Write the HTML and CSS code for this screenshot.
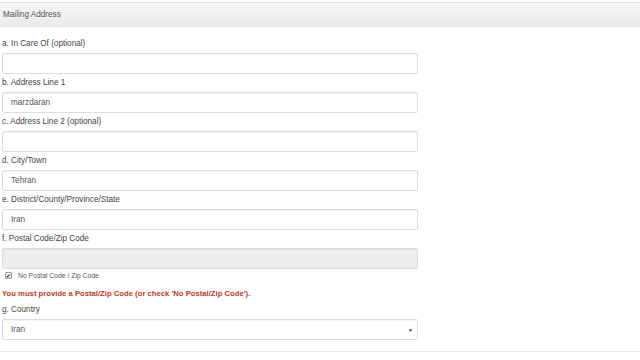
FILE: index.html
```html
<!DOCTYPE html>
<html lang="en">
  <head>
    <meta charset="utf-8">
    <title>Mailing Address</title>
    <link rel="stylesheet" href="styles.css">
  </head>
  <body>
    <div class="panel">
      <div class="panel-heading">Mailing Address</div>
      <div class="panel-body">
        <div class="field">
          <label>a. In Care Of (optional)</label>
          <input type="text" class="form-control" value="">
        </div>
        <div class="field">
          <label>b. Address Line 1</label>
          <input type="text" class="form-control" value="marzdaran">
        </div>
        <div class="field">
          <label>c. Address Line 2 (optional)</label>
          <input type="text" class="form-control" value="">
        </div>
        <div class="field">
          <label>d. City/Town</label>
          <input type="text" class="form-control" value="Tehran">
        </div>
        <div class="field">
          <label>e. District/County/Province/State</label>
          <input type="text" class="form-control" value="Iran">
        </div>
        <div class="field">
          <label>f. Postal Code/Zip Code</label>
          <input type="text" class="form-control" value="" disabled>
        </div>
        <div class="check-row">
          <span class="check-box">&#10004;</span>
          <label>No Postal Code / Zip Code</label>
        </div>
        <div class="error-text">You must provide a Postal/Zip Code (or check 'No Postal/Zip Code').</div>
        <div class="field">
          <label>g. Country</label>
          <div class="select-box">
            <span>Iran</span>
            <span class="caret">&#9660;</span>
          </div>
        </div>
      </div>
    </div>
  </body>
</html>
```

FILE: styles.css
```css
body {
  margin: 0;
  background: white;
  font-family: "Liberation Sans", Arial, sans-serif;
  color: #444;
}
.panel {
  margin-top: 2px;
  border-bottom: 1px solid #e6e6e6;
}
.panel-heading {
  height: 23px;
  line-height: 23px;
  padding-left: 3px;
  font-size: 8.2px;
  color: #555;
  background: linear-gradient(#f6f6f6, #ebebeb);
  border-top: 1px solid #e2e2e2;
  border-bottom: 1px solid #e2e2e2;
}
.panel-body {
  padding: 11px 0 8px 2px;
}
.field {
  margin-bottom: 3px;
}
.field label {
  display: block;
  height: 12px;
  line-height: 12px;
  margin-bottom: 3px;
  font-size: 8.2px;
  color: #444;
}
.form-control {
  display: block;
  box-sizing: border-box;
  width: 416px;
  height: 21px;
  margin: 0;
  padding: 0 8px;
  border: 1px solid #dcdcdc;
  border-radius: 2px;
  box-shadow: inset 0 1px 1px rgba(0, 0, 0, 0.05);
  background: white;
  font-family: "Liberation Sans", Arial, sans-serif;
  font-size: 8.2px;
  color: #555;
}
.form-control:disabled {
  background: #eeeeee;
}
.check-row {
  display: flex;
  align-items: center;
  height: 13px;
  margin-top: -3px;
}
.check-box {
  display: flex;
  align-items: center;
  justify-content: center;
  box-sizing: border-box;
  width: 7px;
  height: 7px;
  margin: 0 6px 0 3px;
  border: 1px solid #999;
  border-radius: 1px;
  background: #f4f4f4;
  font-size: 6px;
  line-height: 1;
  color: #222;
}
.check-row label {
  font-size: 6.8px;
  color: #555;
}
.error-text {
  height: 12px;
  line-height: 12px;
  margin: 6px 0 4px;
  font-size: 7.7px;
  font-weight: bold;
  color: #c0392b;
}
.select-box {
  display: flex;
  align-items: center;
  justify-content: space-between;
  box-sizing: border-box;
  width: 416px;
  height: 21px;
  padding: 0 4px 0 8px;
  border: 1px solid #dcdcdc;
  border-radius: 2px;
  box-shadow: inset 0 1px 1px rgba(0, 0, 0, 0.05);
  font-size: 8.2px;
  color: #555;
}
.caret {
  font-size: 5px;
  color: #444;
}
```
